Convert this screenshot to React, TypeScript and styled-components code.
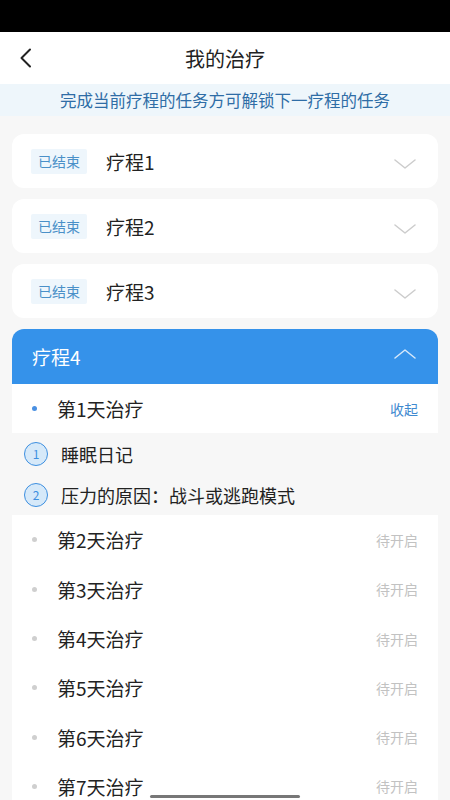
import React from 'react';
import styled, { createGlobalStyle } from 'styled-components';

const GlobalStyle = createGlobalStyle`
  html, body {
    margin: 0;
    padding: 0;
    background: #f7f7f7;
    font-family: "Noto Sans CJK SC", "Noto Sans", sans-serif;
  }
  * { box-sizing: border-box; }
`;

const Page = styled.div`
  width: 450px;
  height: 800px;
  overflow: hidden;
  position: relative;
  background: #f7f7f7;
  display: flex;
  flex-direction: column;
`;

const StatusBar = styled.div`
  height: 32px;
  background: #000;
  flex-shrink: 0;
`;

const NavBar = styled.header`
  height: 52px;
  background: #fff;
  display: flex;
  align-items: center;
  justify-content: center;
  position: relative;
  flex-shrink: 0;
`;

const BackButton = styled.button`
  position: absolute;
  left: 14px;
  top: 14px;
  width: 24px;
  height: 24px;
  padding: 0;
  border: 0;
  background: none;
  display: flex;
  align-items: center;
  justify-content: center;
`;

const Title = styled.h1`
  margin: 0;
  font-size: 20px;
  font-weight: 400;
  color: #222;
`;

const Notice = styled.div`
  height: 32px;
  background: #eef6fb;
  color: #2f6da6;
  font-size: 16.5px;
  display: flex;
  align-items: center;
  justify-content: center;
  flex-shrink: 0;
`;

const List = styled.div`
  display: flex;
  flex-direction: column;
  gap: 11px;
  padding: 18px 12px 0;
`;

const CourseCard = styled.div`
  height: 54px;
  background: #fff;
  border-radius: 12px;
  display: flex;
  align-items: center;
  padding: 0 22px 0 19px;
`;

const Tag = styled.span`
  height: 25px;
  padding: 0 7px;
  background: #eef6fc;
  color: #4a90c8;
  font-size: 14px;
  border-radius: 2px;
  display: flex;
  align-items: center;
`;

const CourseName = styled.span<{ $light?: boolean }>`
  flex: 1;
  margin-left: ${p => (p.$light ? '0' : '19px')};
  font-size: 19px;
  color: ${p => (p.$light ? '#fff' : '#222')};
`;

const ChevronBox = styled.span<{ $up?: boolean }>`
  display: flex;
  margin-top: ${p => (p.$up ? '-6px' : '6px')};
`;

const OpenCourse = styled.div`
  display: flex;
  flex-direction: column;
`;

const OpenHeader = styled.div`
  height: 55px;
  background: #3592ea;
  border-radius: 12px 12px 0 0;
  display: flex;
  align-items: center;
  padding: 0 22px 0 20px;
`;

const DayRow = styled.div`
  height: 49.3px;
  background: #fff;
  display: flex;
  align-items: center;
  padding: 0 20px;
  flex-shrink: 0;
`;

const Dot = styled.span<{ $active?: boolean }>`
  width: 5px;
  height: 5px;
  border-radius: 50%;
  background: ${p => (p.$active ? '#4a90e2' : '#cfcfcf')};
  margin-right: 20px;
`;

const DayName = styled.span`
  flex: 1;
  font-size: 19px;
  color: #222;
`;

const DayStatus = styled.span<{ $active?: boolean }>`
  font-size: 14px;
  color: ${p => (p.$active ? '#3f8ad0' : '#c2c2c2')};
`;

const Tasks = styled.div`
  display: flex;
  flex-direction: column;
  margin: 0 -12px;
`;

const TaskRow = styled.div`
  height: 41px;
  display: flex;
  align-items: center;
  padding-left: 24px;
`;

const TaskNum = styled.span`
  width: 24px;
  height: 24px;
  border-radius: 50%;
  border: 1.6px solid #3d8fe0;
  background: #d6e9f9;
  color: #3d8fe0;
  font-size: 12px;
  display: flex;
  align-items: center;
  justify-content: center;
  margin-right: 13px;
`;

const TaskName = styled.span`
  font-size: 18px;
  color: #222;
`;

const HomeIndicator = styled.div`
  position: absolute;
  left: 150px;
  bottom: 2px;
  width: 150px;
  height: 3px;
  border-radius: 2px;
  background: #777;
`;

const Chevron = ({ up, color }: { up?: boolean; color: string }) => (
  <ChevronBox $up={up}>
    <svg width="22" height="12" viewBox="0 0 22 12">
      <path
        d={up ? 'M1 10 L11 2 L21 10' : 'M1 2 L11 10 L21 2'}
        fill="none"
        stroke={color}
        strokeWidth="1.5"
        strokeLinecap="round"
        strokeLinejoin="round"
      />
    </svg>
  </ChevronBox>
);

const finished = ['疗程1', '疗程2', '疗程3'];
const tasks = ['睡眠日记', '压力的原因：战斗或逃跑模式'];
const pendingDays = [2, 3, 4, 5, 6, 7];

export default function App() {
  return (
    <>
      <GlobalStyle />
      <Page>
        <StatusBar />
        <NavBar>
          <BackButton aria-label="返回">
            <svg width="14" height="20" viewBox="0 0 14 20">
              <path d="M11 1.5 L2.5 10 L11 18.5" fill="none" stroke="#222" strokeWidth="2" strokeLinecap="round" strokeLinejoin="round" />
            </svg>
          </BackButton>
          <Title>我的治疗</Title>
        </NavBar>
        <Notice>完成当前疗程的任务方可解锁下一疗程的任务</Notice>
        <List>
          {finished.map(name => (
            <CourseCard key={name}>
              <Tag>已结束</Tag>
              <CourseName>{name}</CourseName>
              <Chevron color="#cccccc" />
            </CourseCard>
          ))}
          <OpenCourse>
            <OpenHeader>
              <CourseName $light>疗程4</CourseName>
              <Chevron up color="#d6e8fa" />
            </OpenHeader>
            <DayRow>
              <Dot $active />
              <DayName>第1天治疗</DayName>
              <DayStatus $active>收起</DayStatus>
            </DayRow>
            <Tasks>
              {tasks.map((t, i) => (
                <TaskRow key={t}>
                  <TaskNum>{i + 1}</TaskNum>
                  <TaskName>{t}</TaskName>
                </TaskRow>
              ))}
            </Tasks>
            {pendingDays.map(d => (
              <DayRow key={d}>
                <Dot />
                <DayName>第{d}天治疗</DayName>
                <DayStatus>待开启</DayStatus>
              </DayRow>
            ))}
          </OpenCourse>
        </List>
        <HomeIndicator />
      </Page>
    </>
  );
}
